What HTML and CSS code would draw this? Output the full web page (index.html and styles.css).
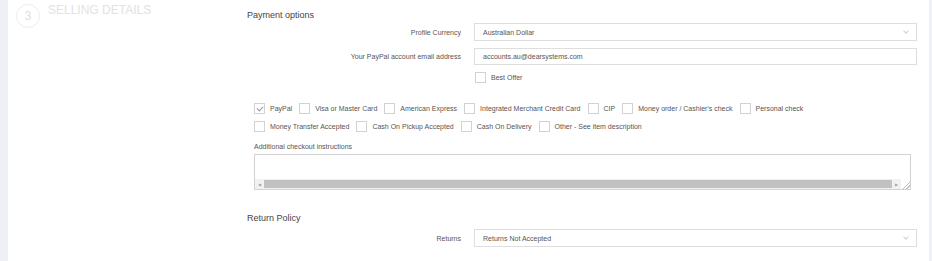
FILE: index.html
```html
<!DOCTYPE html>
<html lang="en">
<head>
    <meta charset="UTF-8">
    <meta name="viewport" content="width=device-width, initial-scale=1.0">
    <title>Selling Details</title>
    <link rel="stylesheet" href="styles.css">
</head>
<body>
    <div class="page">
        <div class="edge"></div>

        <div class="card">
            <!-- Section title -->
            <div class="section-head">
                <span class="step">3</span>
                <span class="section-title">SELLING DETAILS</span>
            </div>

            <!-- Form -->
            <div class="form">
                <h3 class="group-title">Payment options</h3>

                <div class="row row-first">
                    <label class="label">Profile Currency</label>
                    <div class="field select">Australian Dollar <span class="caret"></span></div>
                </div>

                <div class="row row-email">
                    <label class="label">Your PayPal account email address</label>
                    <div class="field">accounts.au@dearsystems.com</div>
                </div>

                <div class="row row-offer">
                    <span class="label"></span>
                    <div class="check"><span class="box"></span>Best Offer</div>
                </div>

                <div class="methods">
                    <div class="check"><span class="box checked"></span>PayPal</div>
                    <div class="check"><span class="box"></span>Visa or Master Card</div>
                    <div class="check"><span class="box"></span>American Express</div>
                    <div class="check"><span class="box"></span>Integrated Merchant Credit Card</div>
                    <div class="check"><span class="box"></span>CIP</div>
                    <div class="check"><span class="box"></span>Money order / Cashier's check</div>
                    <div class="check"><span class="box"></span>Personal check</div>
                    <div class="check"><span class="box"></span>Money Transfer Accepted</div>
                    <div class="check"><span class="box"></span>Cash On Pickup Accepted</div>
                    <div class="check"><span class="box"></span>Cash On Delivery</div>
                    <div class="check"><span class="box"></span>Other - See item description</div>
                </div>

                <div class="note-label">Additional checkout instructions</div>
                <div class="textarea">
                    <div class="hscroll">
                        <span class="arrow">&#9664;</span>
                        <span class="thumb"></span>
                        <span class="arrow">&#9654;</span>
                    </div>
                    <span class="grip"></span>
                </div>

                <h3 class="group-title return-title">Return Policy</h3>

                <div class="row row-returns">
                    <label class="label">Returns</label>
                    <div class="field select">Returns Not Accepted <span class="caret"></span></div>
                </div>
            </div>
        </div>

        <div class="edge edge-right"></div>
    </div>
</body>
</html>
```

FILE: styles.css
```css
/* Selling details form */
* { margin: 0; padding: 0; box-sizing: border-box; }
body { background: #fff; color: #555; font-family: "Liberation Sans", Arial, sans-serif; font-size: 7px; }

.page { display: flex; height: 261px; overflow: hidden; }
.edge { width: 8px; background: #eef0f6; flex: none; }
.edge-right { width: 3px; }
.card { flex: 1; display: flex; background: #fff; }

/* left column with step number */
.section-head { width: 239px; flex: none; display: flex; align-items: flex-start; padding-left: 8px; }
.step {
    width: 24px; height: 24px; margin-top: 4px; border: 1px solid #ededed; border-radius: 50%;
    display: flex; align-items: center; justify-content: center; font-size: 12px; color: #e0e0e0;
}
.section-title { margin-left: 8px; margin-top: 4px; font-size: 12px; line-height: 13px; color: #e2e2e2; }

/* right column */
.form { flex: 1; padding-right: 12px; }
.group-title { font-weight: normal; font-size: 9px; line-height: 10px; color: #444; margin-top: 10px; }
.return-title { margin-top: 23px; }

.row { display: flex; align-items: center; }
.label { width: 214px; flex: none; text-align: right; margin-right: 13px; color: #555; }
.field {
    flex: 1; height: 17px; border: 1px solid #dedede; padding-left: 8px;
    display: flex; align-items: center; color: #555; position: relative;
}
.select { height: 18px; }
.caret {
    position: absolute; right: 8px; top: 5px; width: 4px; height: 4px;
    border-right: 1px solid #d0d0d0; border-bottom: 1px solid #d0d0d0; transform: rotate(45deg);
}
.row-first { margin-top: 3px; }
.row-email { margin-top: 7px; }
.row-offer { margin-top: 7px; }
.row-offer .check { margin-left: 1px; }
.row-returns { margin-top: 6px; }

/* checkbox list */
.check { display: flex; align-items: center; height: 18px; margin-right: 7px; color: #555; white-space: nowrap; }
.row-offer .check { height: 11px; }
.box { width: 11px; height: 11px; border: 1px solid #d2d2d2; margin-right: 5px; flex: none; position: relative; background: #fff; }
.box.checked::after {
    content: ""; position: absolute; left: 3px; top: 1px; width: 3px; height: 5px;
    border-right: 1px solid #999; border-bottom: 1px solid #999; transform: rotate(45deg);
}
.methods { display: flex; flex-wrap: wrap; margin-top: 16px; padding-left: 7px; width: 600px; }

/* instructions */
.note-label { margin-top: 7px; line-height: 10px; padding-left: 7px; color: #555; }
.textarea {
    margin: 2px 6px 0 7px; height: 36px; border: 1px solid #d2d2d2; position: relative;
    display: flex; align-items: flex-end;
}
.hscroll { flex: 1; height: 10px; display: flex; align-items: center; background: #f1f1f1; margin-right: 9px; }
.arrow { width: 9px; font-size: 4px; color: #a3a3a3; text-align: center; flex: none; }
.thumb { flex: 1; height: 8px; background: #c1c1c1; }
.grip {
    position: absolute; right: 0; bottom: 0; width: 9px; height: 10px; background: #fff;
    background-image: linear-gradient(135deg, transparent 60%, #bbb 61%, #bbb 66%, transparent 67%, transparent 78%, #bbb 79%, #bbb 84%, transparent 85%);
}
```
